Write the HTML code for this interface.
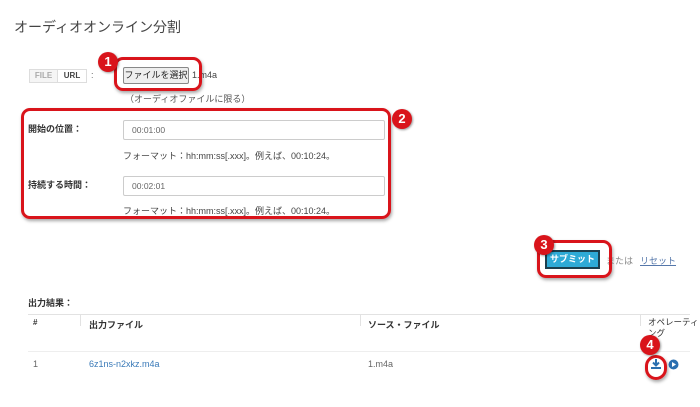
<!DOCTYPE html>
<html><head><meta charset="utf-8"><style>
*{margin:0;padding:0;box-sizing:border-box}
body{width:700px;height:407px;background:#fff;position:relative;overflow:hidden;font-family:"Liberation Sans","Noto Sans CJK JP",sans-serif;color:#333;font-size:9px}
.a{position:absolute;white-space:nowrap}
.red{position:absolute;border:3px solid #d9141b;border-radius:9px;box-shadow:1px 2px 3px rgba(0,0,0,.35)}
.num{position:absolute;width:20px;height:20px;border-radius:50%;background:#d9141b;color:#fff;font-weight:bold;font-size:13px;text-align:center;line-height:20px;box-shadow:1px 1px 2px rgba(0,0,0,.4)}
.inp{position:absolute;border:1px solid #ccc;border-radius:2px;height:20px;padding-left:8px;line-height:18px;color:#666;font-size:8.5px;background:#fff}
.b{font-weight:bold;color:#333}
</style></head><body>
<div class="a" style="left:14px;top:17px;font-size:14px;color:#444">オーディオオンライン分割</div>

<div class="a" style="left:29px;top:69px;width:29px;height:14px;border:1px solid #ddd;background:#f5f5f5;color:#aaa;font-size:8px;font-weight:bold;text-align:center;line-height:12px">FILE</div>
<div class="a" style="left:58px;top:69px;width:29px;height:14px;border:1px solid #ddd;border-left:none;background:#fff;color:#444;font-size:8px;font-weight:bold;text-align:center;line-height:12px">URL</div>
<div class="a" style="left:91px;top:70px;color:#666">:</div>
<div class="a" style="left:123px;top:67px;width:66px;height:17px;border:1px solid #888;border-radius:2px;background:#eee;font-size:9px;text-align:center;line-height:15px;color:#222">ファイルを選択</div>
<div class="a" style="left:192px;top:70px;color:#444">1.m4a</div>
<div class="a" style="left:125px;top:92px;color:#555">（オーディオファイルに限る）</div>
<div class="red" style="left:114px;top:57px;width:88px;height:34px"></div>
<div class="num" style="left:98px;top:52px">1</div>

<div class="a b" style="left:28px;top:122px">開始の位置：</div>
<div class="inp" style="left:123px;top:120px;width:262px">00:01:00</div>
<div class="a" style="left:123px;top:149px;color:#444">フォーマット：hh:mm:ss[.xxx]。例えば、00:10:24。</div>
<div class="a b" style="left:28px;top:178px">持続する時間：</div>
<div class="inp" style="left:123px;top:176px;width:262px">00:02:01</div>
<div class="a" style="left:123px;top:204px;color:#444">フォーマット：hh:mm:ss[.xxx]。例えば、00:10:24。</div>
<div class="red" style="left:21px;top:108px;width:370px;height:111px"></div>
<div class="num" style="left:392px;top:109px">2</div>

<div class="a" style="left:545px;top:250px;width:55px;height:19px;background:#2eaad6;border:2px solid #1c3f4e;color:#fff;font-size:9px;font-weight:bold;text-align:center;line-height:15px">サブミット</div>
<div class="a" style="left:606px;top:254px;color:#888">または</div>
<div class="a" style="left:640px;top:254px;color:#5577aa;text-decoration:underline">リセット</div>
<div class="red" style="left:537px;top:240px;width:75px;height:38px"></div>
<div class="num" style="left:534px;top:235px">3</div>

<div class="a b" style="left:28px;top:296px">出力結果：</div>
<div class="a" style="left:28px;top:314px;width:662px;border-top:1px solid #e2e2e2"></div>
<div class="a" style="left:80px;top:314px;height:12px;border-left:1px solid #e2e2e2"></div>
<div class="a" style="left:360px;top:314px;height:12px;border-left:1px solid #e2e2e2"></div>
<div class="a" style="left:640px;top:314px;height:12px;border-left:1px solid #e2e2e2"></div>
<div class="a b" style="left:33px;top:318px;font-size:8px">#</div>
<div class="a b" style="left:89px;top:318px">出力ファイル</div>
<div class="a b" style="left:368px;top:318px">ソース・ファイル</div>
<div class="a" style="left:648px;top:317px;line-height:11px;font-size:8.5px;color:#333">オペレーティ<br>ング</div>
<div class="a" style="left:28px;top:351px;width:662px;border-top:1px solid #eee"></div>
<div class="a" style="left:33px;top:359px;color:#666">1</div>
<div class="a" style="left:89px;top:359px;color:#3a7ab8">6z1ns-n2xkz.m4a</div>
<div class="a" style="left:368px;top:359px;color:#666">1.m4a</div>
<svg class="a" style="left:650px;top:358px" width="12" height="12" viewBox="0 0 12 12"><path d="M6 1v6M3 4.5l3 3 3-3" stroke="#2a6fb0" stroke-width="2" fill="none"/><rect x="1" y="9" width="10" height="2" fill="#2a6fb0"/></svg>
<svg class="a" style="left:668px;top:359px" width="11" height="11" viewBox="0 0 11 11"><circle cx="5.5" cy="5.5" r="5" fill="#2a6fb0"/><path d="M4 3v5l4-2.5z" fill="#fff"/></svg>
<div class="red" style="left:645px;top:355px;width:22px;height:25px;border-radius:11px"></div>
<div class="num" style="left:640px;top:335px">4</div>
</body></html>
